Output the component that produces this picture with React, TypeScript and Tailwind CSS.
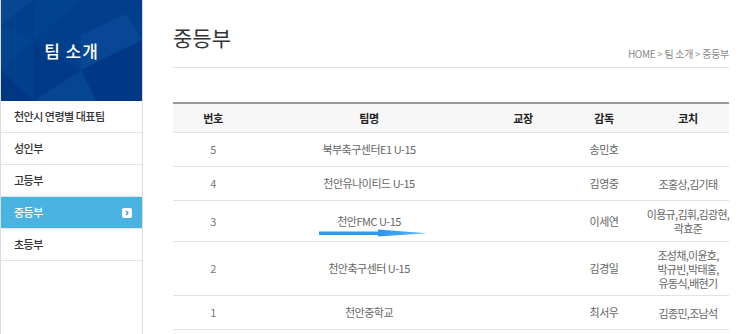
import React from "react";

const font = { fontFamily: '"Noto Sans CJK KR", "Noto Sans", sans-serif' };

const menu = ["천안시 연령별 대표팀", "성인부", "고등부", "중등부", "초등부"];

type Row = { no: string; team: string; principal: string; director: string; coach: string[]; h: string; arrow?: boolean };

const rows: Row[] = [
  { no: "5", team: "북부축구센터E1 U-15", principal: "", director: "송민호", coach: [], h: "h-[34px]" },
  { no: "4", team: "천안유나이티드 U-15", principal: "", director: "김영중", coach: ["조홍상,김기태"], h: "h-[34px]" },
  { no: "3", team: "천안FMC U-15", principal: "", director: "이세연", coach: ["이용규,김휘,김광현,", "곽효준"], h: "h-[41px]", arrow: true },
  { no: "2", team: "천안축구센터 U-15", principal: "", director: "김경일", coach: ["조성채,이윤호,", "박규빈,박태홍,", "유동식,배현기"], h: "h-[54px]" },
  { no: "1", team: "천안중학교", principal: "", director: "최서우", coach: ["김종민,조남석"], h: "h-[34px]" },
];

const cols = "grid grid-cols-[80px_232px_76px_86px_82px]";

export default function App() {
  return (
    <div className="w-[750px] h-[334px] flex overflow-hidden bg-white" style={font}>
      {/* Sidebar */}
      <div className="w-[143px] shrink-0 border-l border-r border-[#dcdcdc] flex flex-col">
        <div className="relative h-[101px] bg-[#003f8c] overflow-hidden flex items-center justify-center">
          <svg className="absolute inset-0" width="141" height="101" viewBox="0 0 141 101">
            <polygon points="0,0 33,0 0,25" fill="#0a4a96" opacity="0.7" />
            <polygon points="33,0 80,0 33,40" fill="#00458f" opacity="0.8" />
            <polygon points="0,25 33,40 0,70" fill="#04468f" opacity="0.8" />
            <polygon points="33,40 80,70 33,101" fill="#003a85" opacity="0.8" />
            <polygon points="80,0 141,0 125,14 80,35" fill="#063f8a" opacity="0.7" />
            <polygon points="80,35 125,14 141,40 80,70" fill="#0a4c98" opacity="0.7" />
            <polygon points="80,70 141,40 141,101 95,101" fill="#003783" opacity="0.8" />
            <polygon points="0,70 33,101 0,101" fill="#00367f" opacity="0.8" />
            <polygon points="33,101 80,70 95,101" fill="#0a4a96" opacity="0.6" />
          </svg>
          <span className="relative text-white text-[17px] font-medium tracking-[1px]">팀 소개</span>
        </div>
        {menu.map((m) => {
          const active = m === "중등부";
          return (
            <div
              key={m}
              className={`h-[32px] border-b border-[#e4e4e4] flex items-center justify-between pl-[13px] pr-[10px] text-[11px] tracking-[-0.5px] font-medium ${
                active ? "bg-[#4ab3e2] text-white border-[#4ab3e2]" : "text-[#333]"
              }`}
            >
              <span>{m}</span>
              {active && (
                <span className="w-[10px] h-[10px] rounded-[2px] bg-white flex items-center justify-center">
                  <svg width="6" height="6" viewBox="0 0 6 6">
                    <path d="M2 1 L4 3 L2 5" stroke="#3a9fd0" strokeWidth="1.4" fill="none" />
                  </svg>
                </span>
              )}
            </div>
          );
        })}
      </div>

      {/* Main */}
      <div className="flex-1 pl-[30px] pr-[21px]">
        <div className="h-[68px] flex justify-between border-b border-[#e2e2e2]">
          <h1 className="mt-[23px] text-[21px] leading-[28px] text-[#333] font-normal">중등부</h1>
          <div className="self-end mb-[6px] text-[10px] text-[#888] tracking-[-0.3px]">
            HOME <span className="text-[#999]">&gt;</span> 팀 소개 <span className="text-[#999]">&gt;</span> 중등부
          </div>
        </div>

        <div className="mt-[34px] border-t-2 border-[#9a9a9a] relative">
          <div className={`${cols} h-[29px] bg-[#f7f7f7] border-b border-[#e2e2e2] text-[11px] tracking-[-0.3px] font-bold text-[#222]`}>
            {["번호", "팀명", "교장", "감독", "코치"].map((h) => (
              <div key={h} className="flex items-center justify-center">{h}</div>
            ))}
          </div>
          {rows.map((r) => (
            <div key={r.no} className={`${cols} ${r.h} border-b border-[#e2e2e2] text-[11px] tracking-[-0.5px] text-[#666] relative`}>
              <div className="flex items-center justify-center text-[#777]">{r.no}</div>
              <div className="flex items-center justify-center">{r.team}</div>
              <div className="flex items-center justify-center">{r.principal}</div>
              <div className="flex items-center justify-center">{r.director}</div>
              <div className="flex flex-col items-center justify-center leading-[14px] tracking-[-0.7px] whitespace-nowrap">
                {r.coach.map((c) => (
                  <span key={c}>{c}</span>
                ))}
              </div>
              {r.arrow && (
                <svg className="absolute left-[146px] top-[27px]" width="110" height="10" viewBox="0 0 110 10">
                  <defs>
                    <linearGradient id="ag" x1="0" x2="1" y1="0" y2="0">
                      <stop offset="0" stopColor="#2d95ee" />
                      <stop offset="1" stopColor="#5ab8f6" />
                    </linearGradient>
                  </defs>
                  <rect x="0" y="3.5" width="64" height="3.5" fill="#2f98ef" />
                  <polygon points="59,1.5 108,5.2 59,8.5" fill="url(#ag)" />
                </svg>
              )}
            </div>
          ))}
        </div>
      </div>
    </div>
  );
}
